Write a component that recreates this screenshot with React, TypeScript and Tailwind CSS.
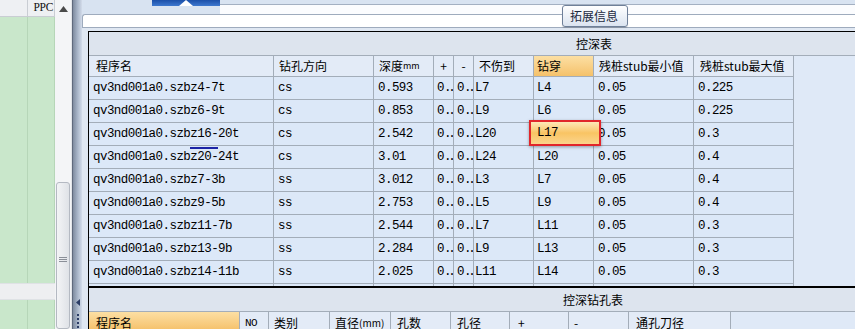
import React from "react";

const GRID = "border-[#a3adb9]";
const MONO = "font-['Liberation_Mono',monospace] text-[12.5px] tracking-[-0.55px]";

const W1 = [
  "w-[185px]",
  "w-[100px]",
  "w-[60px]",
  "w-[20px]",
  "w-[20px]",
  "w-[60px]",
  "w-[60px]",
  "w-[100px]",
  "w-[100px]",
];

const rows: string[][] = [
  ["qv3nd001a0.szbz4-7t", "cs", "0.593", "L7", "L4", "0.05", "0.225"],
  ["qv3nd001a0.szbz6-9t", "cs", "0.853", "L9", "L6", "0.05", "0.225"],
  ["qv3nd001a0.szbz16-20t", "cs", "2.542", "L20", "L17", "0.05", "0.3"],
  ["qv3nd001a0.szbz20-24t", "cs", "3.01", "L24", "L20", "0.05", "0.4"],
  ["qv3nd001a0.szbz7-3b", "ss", "3.012", "L3", "L7", "0.05", "0.4"],
  ["qv3nd001a0.szbz9-5b", "ss", "2.753", "L5", "L9", "0.05", "0.4"],
  ["qv3nd001a0.szbz11-7b", "ss", "2.544", "L7", "L11", "0.05", "0.3"],
  ["qv3nd001a0.szbz13-9b", "ss", "2.284", "L9", "L13", "0.05", "0.3"],
  ["qv3nd001a0.szbz14-11b", "ss", "2.025", "L11", "L14", "0.05", "0.3"],
];

function Cell({
  w,
  className = "",
  children,
}: {
  w: string;
  className?: string;
  children?: React.ReactNode;
}) {
  return (
    <div
      className={`${w} shrink-0 h-full border-r border-b ${GRID} flex items-center overflow-hidden whitespace-nowrap ${className}`}
    >
      {children}
    </div>
  );
}

function Dots() {
  return (
    <span className="inline-flex items-center">
      <span>0</span>
      <span className="tracking-[-3.2px]">..</span>
    </span>
  );
}

function LeftPanel() {
  return (
    <div className="flex w-[72px] shrink-0 h-full">
      <div className="flex flex-col w-[55px] h-full">
        <div className="flex h-[17px] bg-[#eef0f3] border-b border-[#c9cdd3]">
          <div className="w-[28px] border-r border-[#c9cdd3]" />
          <div className="w-[27px] border-r border-[#c9cdd3] flex items-center justify-end pr-[1px] font-['Liberation_Serif',serif] text-[11.5px] tracking-[-0.3px] text-[#111]">
            PPC
          </div>
        </div>
        <div className="flex h-[266px] bg-[#c9e7cb]">
          <div className="w-[28px] border-r border-[#b6d6b8]" />
          <div className="w-[27px] border-r border-[#b6d6b8]" />
        </div>
        <div className="h-[17px] bg-[#eeeff1] border-y border-[#dfe2e5]" />
        <div className="flex flex-1 bg-[#c9e7cb]">
          <div className="w-[28px] border-r border-[#b6d6b8]" />
          <div className="w-[27px] border-r border-[#b6d6b8]" />
        </div>
      </div>
      <div className="flex flex-col w-[17px] h-full bg-[#f4f5f7] border-r border-[#e2e5e9]">
        <div className="h-[17px] flex items-center justify-center">
          <svg width="9" height="6" viewBox="0 0 9 6">
            <polygon points="4.5,0 9,6 0,6" fill="#4a4a4a" />
          </svg>
        </div>
        <div className="flex-1 flex flex-col pt-[165px] px-[1px]">
          <div className="flex-1 rounded-[3px] border border-[#b4b9c2] bg-gradient-to-r from-[#f3f4f6] to-[#dfe2e7] flex flex-col items-center pt-[74px]">
            <div className="w-[8px] h-[1px] bg-[#8a8f98] mb-[1px]" />
            <div className="w-[8px] h-[1px] bg-[#8a8f98] mb-[1px]" />
            <div className="w-[8px] h-[1px] bg-[#8a8f98]" />
          </div>
        </div>
      </div>
    </div>
  );
}

function Splitter() {
  return (
    <div className="w-[10px] shrink-0 h-full flex flex-col items-center justify-end border-l border-[#5f6a7d] bg-gradient-to-r from-[#7f8ca0] via-[#a8b5c8] to-[#d3dcea]">
      <svg width="4" height="7" viewBox="0 0 4 7" className="mb-[8px]">
        <polygon points="4,0 4,7 0,3.5" fill="#2c3d66" />
      </svg>
      <div className="flex flex-col gap-[2px] mb-[1px]">
        <div className="w-[2px] h-[2px] bg-[#2c3d66]" />
        <div className="w-[2px] h-[2px] bg-[#2c3d66]" />
        <div className="w-[2px] h-[2px] bg-[#2c3d66]" />
        <div className="w-[2px] h-[2px] bg-[#2c3d66]" />
      </div>
    </div>
  );
}

function TopArea() {
  return (
    <div className="relative h-[31px] shrink-0">
      <div className="flex h-[14px]">
        <div className="w-[70px] bg-[#d8e3f1]" />
        <div className="w-[68px] flex flex-col">
          <div className="relative h-[6px] bg-gradient-to-b from-[#1b4fa8] to-[#3d78cf]">
            <svg width="14" height="6" viewBox="0 0 14 6" className="absolute left-[27px] top-0">
              <polygon points="7,0 14,6 0,6" fill="#ffffff" />
            </svg>
          </div>
          <div className="flex-1 bg-[#d8e3f1]" />
        </div>
        <div className="flex-1 flex flex-col">
          <div className="h-[5px] bg-[#d8e3f1] border-b border-[#a3b0c2]" />
          <div className="flex-1 bg-[#fbfcfe]" />
        </div>
      </div>
      <div className="h-[14px] bg-white border-t border-b border-l border-[#9eabbd] rounded-tl-[3px]" />
      <div className="h-[3px] bg-[#dfe7f2]" />
      <div className="absolute left-[480px] top-[5px] w-[66px] h-[22px] rounded-[3px] border border-[#6f8099] bg-gradient-to-b from-[#ffffff] to-[#dbe4f0] flex items-center pl-[7px] text-[12px] text-[#1c2a40] shadow-[0_1px_1px_rgba(0,0,0,0.15)]">
        拓展信息
      </div>
    </div>
  );
}

function UpperTable() {
  return (
    <div className="h-[254px] shrink-0 overflow-hidden flex flex-col">
      <div className="h-[24px] shrink-0 bg-[#dde4ee] border-b border-[#a3adb9] flex items-center pl-[487px] text-[12px]">
        控深表
      </div>
      <div className="flex h-[21px] shrink-0 bg-[#e3ebf7] text-[12px]">
        <Cell w={W1[0]} className="pl-[7px]">程序名</Cell>
        <Cell w={W1[1]} className="pl-[5px]">钻孔方向</Cell>
        <Cell w={W1[2]} className="pl-[5px]">
          深度<span className="text-[9px]">mm</span>
        </Cell>
        <Cell w={W1[3]} className="justify-center">+</Cell>
        <Cell w={W1[4]} className="justify-center">-</Cell>
        <Cell w={W1[5]} className="pl-[5px]">不伤到</Cell>
        <Cell w={W1[6]} className="pl-[3px] bg-gradient-to-b from-[#fcdfa3] to-[#f5c16a]">钻穿</Cell>
        <Cell w={W1[7]} className="pl-[5px]">残桩stub最小值</Cell>
        <Cell w={W1[8]} className="pl-[6px]">残桩stub最大值</Cell>
        <div className="flex-1 bg-[#dfe9f7]" />
      </div>
      {rows.map((r, i) => (
        <div key={i} className={`flex h-[23px] shrink-0 bg-[#dce8f8] ${MONO}`}>
          <Cell w={W1[0]} className="pl-[4px] relative">
            {r[0]}
            {i === 3 && (
              <div className="absolute left-[101px] top-[1px] w-[28px] h-[2px] bg-[#1b23a6]" />
            )}
          </Cell>
          <Cell w={W1[1]} className="pl-[4px]">{r[1]}</Cell>
          <Cell w={W1[2]} className="pl-[4px]">{r[2]}</Cell>
          <Cell w={W1[3]} className="pl-[3px]"><Dots /></Cell>
          <Cell w={W1[4]} className="pl-[3px]"><Dots /></Cell>
          <Cell w={W1[5]} className="pl-[1px]">{r[3]}</Cell>
          {i === 2 ? (
            <div className={`${W1[6]} shrink-0 h-full border-r border-b ${GRID} relative`}>
              <div className="absolute left-[-5px] top-[-3px] w-[72px] h-[26px] z-10 border-2 border-[#e1262b] bg-gradient-to-b from-[#fde8b6] via-[#f9c463] to-[#fbd58c] shadow-[0_1px_3px_rgba(0,0,0,0.35)] flex items-center pl-[6px] pt-[1px]">
                {r[4]}
              </div>
            </div>
          ) : (
            <Cell w={W1[6]} className="pl-[3px]">{r[4]}</Cell>
          )}
          <Cell w={W1[7]} className="pl-[4px]">{r[5]}</Cell>
          <Cell w={W1[8]} className="pl-[4px]">{r[6]}</Cell>
          <div className="flex-1 bg-[#dfe9f7]" />
        </div>
      ))}
      <div className="flex h-[23px] shrink-0 bg-[#dce8f8]">
        {W1.map((w, k) => (
          <Cell key={k} w={w} />
        ))}
        <div className="flex-1 bg-[#dfe9f7]" />
      </div>
    </div>
  );
}

function LowerTable() {
  return (
    <div className="flex flex-col flex-1">
      <div className="h-[24px] shrink-0 bg-[#dde4ee] border-b border-[#a3adb9] flex items-center pl-[474px] text-[12px]">
        控深钻孔表
      </div>
      <div className="flex flex-1 bg-[#e3ebf7] text-[12px] leading-[14px]">
        <Cell w="w-[151px]" className="pl-[7px] items-start pt-[4px] bg-gradient-to-b from-[#fcdfa3] to-[#f5c16a]">程序名</Cell>
        <Cell w="w-[29px]" className="pl-[5px] items-start pt-[4px] font-['Liberation_Mono',monospace] text-[11px] tracking-[-0.5px]">NO</Cell>
        <Cell w="w-[61px]" className="pl-[5px] items-start pt-[4px]">类别</Cell>
        <Cell w="w-[61px]" className="pl-[5px] items-start pt-[4px]">
          直径<span className="text-[10px]">(mm)</span>
        </Cell>
        <Cell w="w-[60px]" className="pl-[6px] items-start pt-[4px]">孔数</Cell>
        <Cell w="w-[59px]" className="pl-[6px] items-start pt-[4px]">孔径</Cell>
        <Cell w="w-[59px]" className="pl-[8px] items-start pt-[4px]">+</Cell>
        <Cell w="w-[60px]" className="pl-[5px] items-start pt-[4px]">-</Cell>
        <Cell w="w-[102px]" className="pl-[7px] items-start pt-[4px]">通孔刀径</Cell>
        <div className="flex-1 bg-[#dfe9f7]" />
      </div>
    </div>
  );
}

function Main() {
  return (
    <div className="flex flex-col flex-1 h-full bg-[#dfe7f2] overflow-hidden">
      <TopArea />
      <div className="flex flex-col flex-1 ml-[6px] border-l border-t border-black bg-[#dce8f8] overflow-hidden">
        <UpperTable />
        <div className="h-[2px] shrink-0 bg-black" />
        <LowerTable />
      </div>
    </div>
  );
}

export default function App() {
  return (
    <div className="flex h-[329px] w-[855px] overflow-hidden bg-[#d8e3f1] font-['Noto_Sans_CJK_SC',sans-serif] text-[12px] text-black">
      <LeftPanel />
      <Splitter />
      <Main />
    </div>
  );
}
